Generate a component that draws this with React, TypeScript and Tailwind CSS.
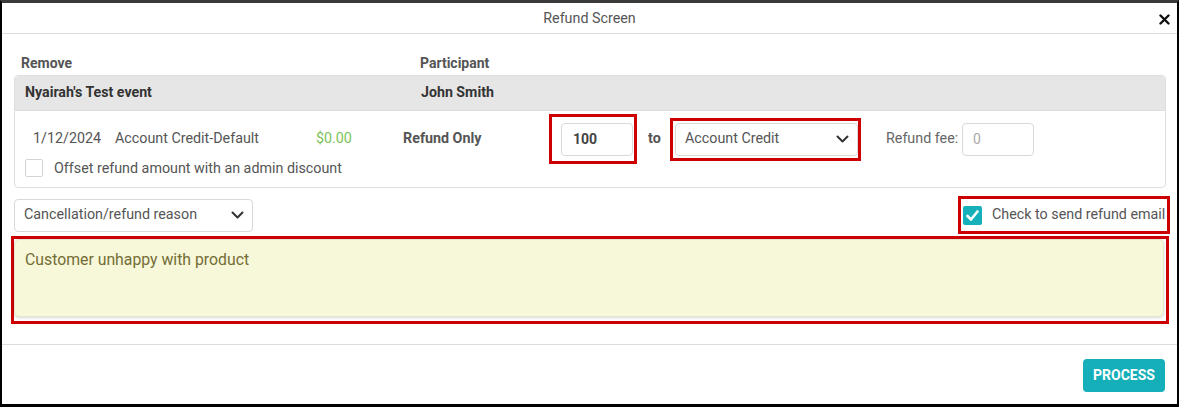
import { useState } from "react";

function Chevron() {
  return (
    <svg width="13" height="8" viewBox="0 0 13 8" fill="none">
      <path d="M1.5 1.5l5 5 5-5" stroke="#333" strokeWidth="2" strokeLinecap="round" strokeLinejoin="round" />
    </svg>
  );
}

export default function App() {
  const [offset, setOffset] = useState(false);
  const [sendEmail, setSendEmail] = useState(true);
  const [amount, setAmount] = useState("100");
  const [reason, setReason] = useState("Customer unhappy with product");

  return (
    <div className="flex h-[407px] w-[1179px] flex-col border-b-[3px] border-l-2 border-r-2 border-t-[3px] border-black border-t-[#3a3a3a] bg-white font-[Roboto,sans-serif] text-[14.3px] text-[#555]">
      {/* header */}
      <div className="relative flex h-[31px] items-center justify-center border-b border-[#dcdcdc] pt-[2px]">
        <span className="text-[14.3px] text-[#555]">Refund Screen</span>
        <button className="absolute right-[7px] top-[11px]">
          <svg width="11" height="11" viewBox="0 0 11 11">
            <path d="M1.5 1.5l8 8M9.5 1.5l-8 8" stroke="#111" strokeWidth="2.4" strokeLinecap="round" />
          </svg>
        </button>
      </div>

      <div className="pl-[12px] pr-[11px]">
        <div className="flex h-[41px] items-end pb-[4px] text-[14px] font-bold leading-[16px] text-[#555]">
          <span className="w-[406px] pl-[7px]">Remove</span>
          <span>Participant</span>
        </div>

        {/* order card */}
        <div className="rounded-[4px] border border-[#dedede]">
          <div className="flex h-[35px] items-center rounded-t-[4px] border-b border-[#dedede] bg-[#e6e6e6] text-[14.2px] font-bold text-[#333]">
            <span className="w-[406px] pl-[10px]">Nyairah's Test event</span>
            <span>John Smith</span>
          </div>
          <div className="pb-[10px] pt-[3px]">
            <div className="flex h-[50px] items-center">
              <span className="w-[100px] pl-[18px]">1/12/2024</span>
              <span className="w-[201px]">Account Credit-Default</span>
              <span className="w-[87px] text-[#7cc35a]">$0.00</span>
              <span className="w-[146px] font-bold">Refund Only</span>
              <div className="flex h-[50px] w-[88px] items-center border-[3px] border-[#cc0000] pl-[9px]">
                <input
                  value={amount}
                  onChange={(e) => setAmount(e.target.value)}
                  className="h-[33px] w-[72px] rounded-[4px] border border-[#d9d9d9] px-[11px] text-[14px] font-bold text-[#444] outline-none"
                />
              </div>
              <span className="w-[33px] pl-[11px] font-bold">to</span>
              <div className="flex h-[43px] w-[191px] items-center border-[3px] border-[#cc0000] pl-[2px]">
                <div className="flex h-[33px] w-[183px] items-center justify-between rounded-[4px] border border-[#d9d9d9] pl-[9px] pr-[8px] text-[#555]">
                  <span>Account Credit</span>
                  <Chevron />
                </div>
              </div>
              <span className="w-[101px] pl-[25px] text-[#666]">Refund fee:</span>
              <input
                placeholder="0"
                className="h-[33px] w-[72px] rounded-[4px] border border-[#d9d9d9] px-[10px] text-[14px] outline-none placeholder:text-[#aaa]"
              />
            </div>
            <label className="-mt-[5px] flex h-[18px] items-center gap-[11px] pl-[10px]">
              <input type="checkbox" checked={offset} onChange={() => setOffset(!offset)} className="hidden" />
              <span className="h-[18px] w-[18px] rounded-[2px] border border-[#d4d4d4] bg-white" />
              <span className="pt-[1px]">Offset refund amount with an admin discount</span>
            </label>
          </div>
        </div>

        {/* reason + email */}
        <div className="mt-[8px] flex h-[38px] items-center justify-between">
          <div className="flex h-[33px] w-[239px] items-center justify-between rounded-[4px] border border-[#d9d9d9] pl-[9px] pr-[8px] text-[#555]">
            <span>Cancellation/refund reason</span>
            <Chevron />
          </div>
          <label className="-mr-[4px] flex h-[38px] w-[212px] items-center gap-[10px] border-[3px] border-[#cc0000] pl-[2px]">
            <input type="checkbox" checked={sendEmail} onChange={() => setSendEmail(!sendEmail)} className="hidden" />
            <span className="flex h-[19px] w-[19px] items-center justify-center rounded-[2px] bg-[#16b0bb]">
              {sendEmail && (
                <svg width="13" height="11" viewBox="0 0 13 11">
                  <path d="M1.5 6l3.5 3.5 6.5-8" stroke="#fff" strokeWidth="2.6" fill="none" strokeLinecap="round" strokeLinejoin="round" />
                </svg>
              )}
            </span>
            <span className="text-[#555]">Check to send refund email</span>
          </label>
        </div>

        {/* note */}
        <div className="-mx-[3px] mt-[2px] border-[3px] border-[#cc0000] pb-[4px] pl-[0px] pr-[2px]">
          <textarea
            value={reason}
            onChange={(e) => setReason(e.target.value)}
            className="block h-[78px] w-full resize-none rounded-[5px] border border-[#e4e4d0] bg-[#f7f7da] px-[10px] py-[8px] text-[15.8px] text-[#736d35] shadow-[0_1px_3px_rgba(0,0,0,0.15)] outline-none"
          />
        </div>
      </div>

      {/* footer */}
      <div className="mt-[20px] flex justify-end border-t border-[#dcdcdc] pr-[12px] pt-[14px]">
        <button className="h-[33px] w-[82px] rounded-[4px] bg-[#14afb8] text-[14px] font-bold text-white">
          PROCESS
        </button>
      </div>
    </div>
  );
}
